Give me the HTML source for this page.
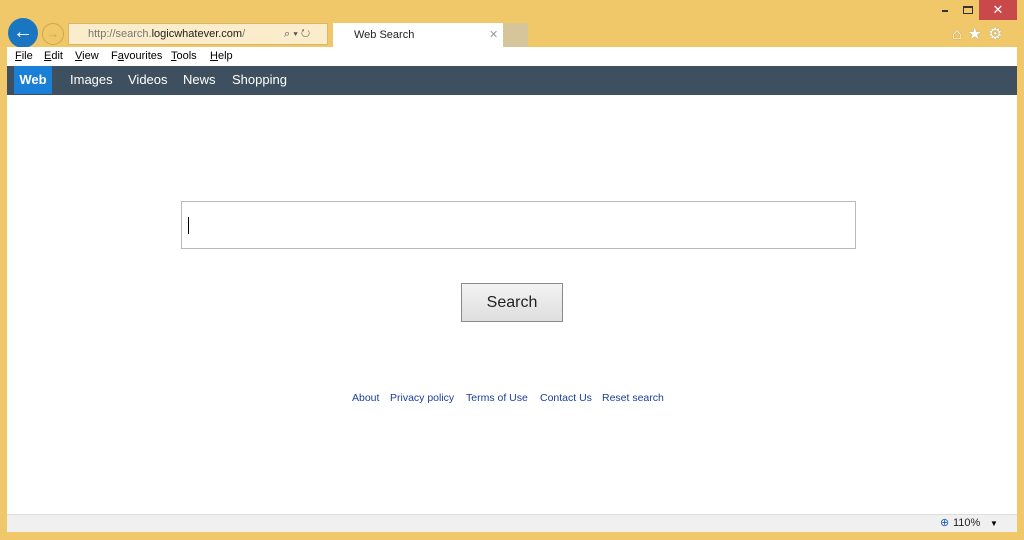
<!DOCTYPE html>
<html><head><style>
*{margin:0;padding:0;box-sizing:border-box}
body{width:1024px;height:540px;background:#f0c869;position:relative;overflow:hidden;font-family:"Liberation Sans",sans-serif}
.a{position:absolute}
.menu span{position:absolute;top:0;font-size:11px;color:#000}
.nav span{position:absolute;top:0;color:#fff;font-size:13px;line-height:28px}
.links a{position:absolute;top:0;color:#1a3e9a;text-decoration:none;font-size:10.5px;white-space:nowrap}
</style></head><body>
<div class="a" style="left:979px;top:0;width:38px;height:20px;background:#c9484a;color:#fff;text-align:center;font-size:13px;line-height:19px">✕</div>
<div class="a" style="left:942px;top:10px;width:6px;height:2px;background:#333"></div>
<div class="a" style="left:963px;top:6px;width:10px;height:8px;border:1px solid #333;border-top-width:2px"></div>
<div class="a" style="left:952px;top:24px;color:#fff;font-size:16px;letter-spacing:6px;text-shadow:0 0 1px #777">⌂★⚙</div>
<div class="a" style="left:8px;top:18px;width:30px;height:30px;border-radius:50%;background:#1a76c0;color:#fff;font-size:20px;font-weight:bold;text-align:center;line-height:28px">←</div>
<div class="a" style="left:42px;top:23px;width:22px;height:22px;border-radius:50%;border:1px solid #c9a848;color:#c9a848;font-size:13px;text-align:center;line-height:20px">→</div>
<div class="a" style="left:68px;top:23px;width:260px;height:22px;background:#fbeccb;border:1px solid #d7b76b;font-size:11px;line-height:20px;padding-left:19px;color:#777">http://search.<span style="color:#222">logicwhatever.com</span>/<span style="position:absolute;left:215px;color:#555">⌕ ▾ ↻</span></div>
<div class="a" style="left:333px;top:23px;width:170px;height:24px;background:#fff;font-size:11px;line-height:24px;padding-left:21px;color:#222">Web Search<span style="position:absolute;left:156px;color:#999">✕</span></div>
<div class="a" style="left:503px;top:23px;width:25px;height:24px;background:#d6c49b"></div>
<div class="a menu" style="left:7px;top:47px;width:1010px;height:19px;background:#fff;line-height:19px"><span style="left:8px"><u>F</u>ile</span><span style="left:37px"><u>E</u>dit</span><span style="left:68px"><u>V</u>iew</span><span style="left:104px">F<u>a</u>vourites</span><span style="left:164px"><u>T</u>ools</span><span style="left:203px"><u>H</u>elp</span></div>
<div class="a nav" style="left:7px;top:66px;width:1010px;height:29px;background:#3e5060">
<span style="left:7px;width:38px;background:#1a7fd6;font-weight:bold;text-align:center">Web</span>
<span style="left:63px">Images</span><span style="left:121px">Videos</span><span style="left:176px">News</span><span style="left:225px">Shopping</span></div>
<div class="a" style="left:7px;top:95px;width:1010px;height:419px;background:#fff"></div>
<div class="a" style="left:181px;top:201px;width:675px;height:48px;border:1px solid #b9b9b9;background:#fff"><div class="a" style="left:6px;top:15px;width:1px;height:17px;background:#000"></div></div>
<div class="a" style="left:461px;top:283px;width:102px;height:39px;border:1px solid #8a8a8a;background:linear-gradient(#f3f3f3,#dedede);font-size:16px;text-align:center;line-height:37px;color:#222">Search</div>
<div class="a links" style="left:0;top:391px;line-height:14px"><a style="left:352px">About</a><a style="left:390px">Privacy policy</a><a style="left:466px">Terms of Use</a><a style="left:540px">Contact Us</a><a style="left:602px">Reset search</a></div>
<div class="a" style="left:7px;top:514px;width:1010px;height:18px;background:#f0f0f0;border-top:1px solid #ddd;font-size:11px;line-height:17px"><span class="a" style="left:933px;color:#1a5fb0">⊕</span><span class="a" style="left:946px;color:#222">110%</span><span class="a" style="left:983px;font-size:8px">▼</span></div>
</body></html>
